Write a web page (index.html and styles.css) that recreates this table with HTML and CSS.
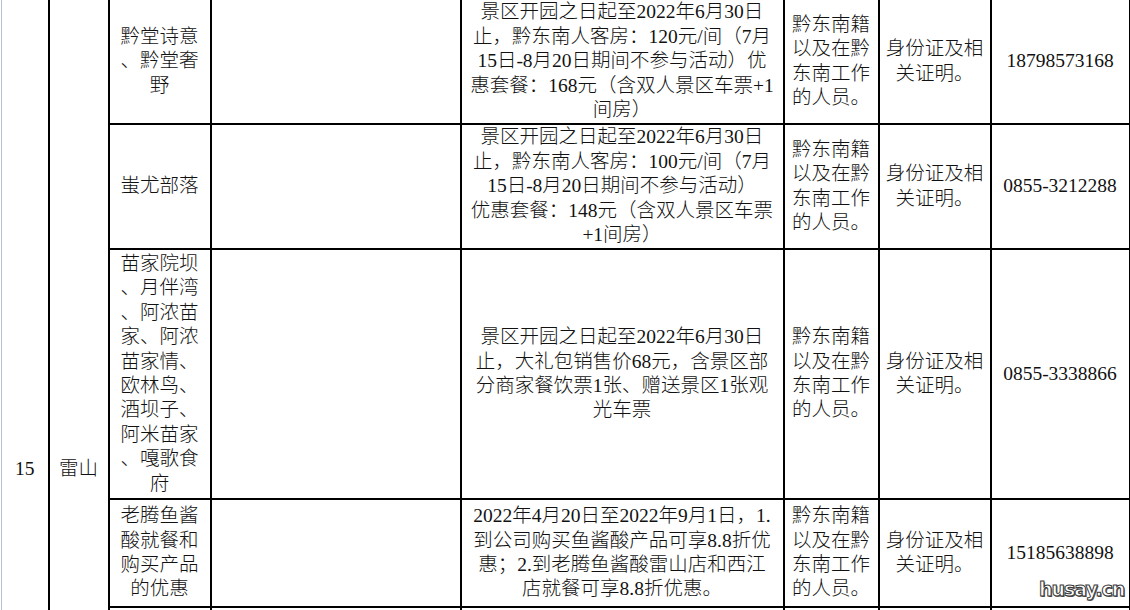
FILE: index.html
```html
<!DOCTYPE html>
<html lang="zh-CN">
<head>
<meta charset="utf-8">
<title>黔东南优惠</title>
<link rel="stylesheet" href="styles.css">
</head>
<body>
<div class="page">
  <table class="sheet">
    <colgroup>
      <col class="c1"><col class="c2"><col class="c3"><col class="c4"><col class="c5"><col class="c6"><col class="c7"><col class="c8">
    </colgroup>
    <tbody>
      <tr class="r1">
        <td class="edge" rowspan="5">15</td>
        <td rowspan="5">雷山</td>
        <td>黔堂诗意<br>、黔堂奢<br>野</td>
        <td></td>
        <td>景区开园之日起至2022年6月30日<br>止，黔东南人客房：120元/间（7月<br>15日-8月20日期间不参与活动）优<br>惠套餐：168元（含双人景区车票+1<br>间房）</td>
        <td>黔东南籍<br>以及在黔<br>东南工作<br>的人员。</td>
        <td>身份证及相<br>关证明。</td>
        <td>18798573168</td>
      </tr>
      <tr class="r2">
        <td>蚩尤部落</td>
        <td></td>
        <td>景区开园之日起至2022年6月30日<br>止，黔东南人客房：100元/间（7月<br>15日-8月20日期间不参与活动）<br>优惠套餐：148元（含双人景区车票<br>+1间房）</td>
        <td>黔东南籍<br>以及在黔<br>东南工作<br>的人员。</td>
        <td>身份证及相<br>关证明。</td>
        <td>0855-3212288</td>
      </tr>
      <tr class="r3">
        <td>苗家院坝<br>、月伴湾<br>、阿浓苗<br>家、阿浓<br>苗家情、<br>欧林鸟、<br>酒坝子、<br>阿米苗家<br>、嘎歌食<br>府</td>
        <td></td>
        <td>景区开园之日起至2022年6月30日<br>止，大礼包销售价68元，含景区部<br>分商家餐饮票1张、赠送景区1张观<br>光车票</td>
        <td>黔东南籍<br>以及在黔<br>东南工作<br>的人员。</td>
        <td>身份证及相<br>关证明。</td>
        <td>0855-3338866</td>
      </tr>
      <tr class="r4">
        <td>老腾鱼酱<br>酸就餐和<br>购买产品<br>的优惠</td>
        <td></td>
        <td>2022年4月20日至2022年9月1日，1.<br>到公司购买鱼酱酸产品可享8.8折优<br>惠；2.到老腾鱼酱酸雷山店和西江<br>店就餐可享8.8折优惠。</td>
        <td>黔东南籍<br>以及在黔<br>东南工作<br>的人员。</td>
        <td>身份证及相<br>关证明。</td>
        <td>15185638898</td>
      </tr>
      <tr class="r5">
        <td></td><td></td><td></td><td></td><td></td><td></td>
      </tr>
    </tbody>
  </table>
  <div class="mark">husay.cn</div>
</div>
</body>
</html>
```

FILE: styles.css
```css
html, body {
  margin: 0;
  padding: 0;
  background: #fff;
}

.page {
  position: relative;
  width: 1130px;
  height: 610px;
  overflow: hidden;
  background: #fff;
}

.sheet {
  border-collapse: collapse;
  table-layout: fixed;
  width: 1128px;
  margin-top: -2px;
  margin-left: 1px;
  font-family: "Liberation Serif", "Noto Sans CJK SC", serif;
  font-size: 19.5px;
  font-weight: 300;
  line-height: 24.4px;
  color: #111;
}

.c1 { width: 47px; }
.c2 { width: 60px; }
.c3 { width: 102px; }
.c4 { width: 250px; }
.c5 { width: 323px; }
.c6 { width: 95px; }
.c7 { width: 112px; }
.c8 { width: 139px; }

.sheet td {
  border: 2px solid #000;
  padding: 0;
  text-align: center;
  vertical-align: middle;
  white-space: nowrap;
  overflow: hidden;
}

.sheet td.edge {
  border-left: 1px solid #b9bfd0;
}

.r1 { height: 125px; }
.r2 { height: 125px; }
.r3 { height: 250px; }
.r4 { height: 108px; }
.r5 { height: 332px; }

.mark {
  position: absolute;
  left: 1039px;
  top: 578px;
  font-family: "DejaVu Sans", sans-serif;
  font-weight: bold;
  font-size: 19px;
  letter-spacing: -1px;
  color: #fff;
  -webkit-text-stroke: 1px #3a3a3a;
  text-shadow: 1px 1px 0 #555;
}
```
